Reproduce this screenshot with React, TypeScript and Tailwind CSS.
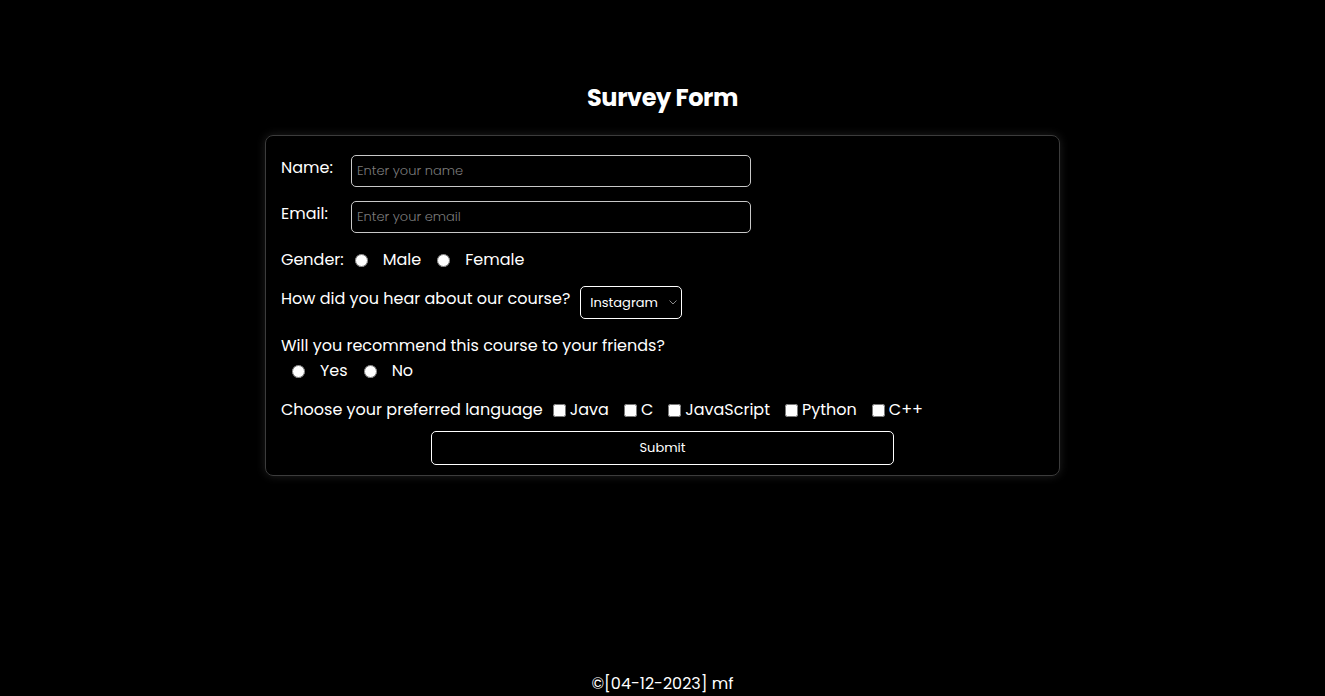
import { ReactElement } from "react"

const FONT = "font-['Poppins','Open_Sans',sans-serif]"
const INPUT_CLASSNAME = 'ml-[70px] w-[400px] h-[32px] bg-black border border-[#c8c8c8] rounded-[5px] px-[5px] text-[13px] text-white font-light placeholder:text-[#7c7c7c] outline-none'
const LABEL_CLASSNAME = 'text-[16px] leading-[24px] pt-[1px] w-0 whitespace-nowrap'

const Radio = ({ name, label, first }: { name: string, label: string, first?: boolean }): ReactElement => (
    <label className='flex items-center'>
        <input type='radio' name={name} className={`w-[13px] h-[13px] m-0 ${first ? 'ml-[11px]' : 'ml-[16px]'} mr-[15px]`} />
        <span>{label}</span>
    </label>
)

const Check = ({ label, first }: { label: string, first?: boolean }): ReactElement => (
    <label className={`flex items-center ${first ? 'ml-[10px]' : 'ml-[15px]'}`}>
        <input type='checkbox' className='w-[13px] h-[13px] m-0 mr-[4px]' />
        <span>{label}</span>
    </label>
)

const App = (): ReactElement => {
    return (
        <div className={`min-h-screen bg-black text-white ${FONT} flex flex-col items-center`}>
            <h1 className='mt-[82px] text-[24px] leading-[32px] font-bold tracking-[-0.4px]'>Survey Form</h1>

            {/* form card */}
            <form className='mt-[21px] w-[795px] border border-[#3c3c3c] rounded-[8px] shadow-[0_0_10px_rgba(255,255,255,0.12)] px-[15px] pt-[19px] pb-[10px] flex flex-col text-[16px] leading-[24px]'>
                <div className='flex items-start'>
                    <label className={LABEL_CLASSNAME}>Name:</label>
                    <input type='text' placeholder='Enter your name' className={INPUT_CLASSNAME} />
                </div>

                <div className='flex items-start mt-[14px]'>
                    <label className={LABEL_CLASSNAME}>Email:</label>
                    <input type='email' placeholder='Enter your email' className={INPUT_CLASSNAME} />
                </div>

                <div className='flex items-center mt-[15px]'>
                    <span>Gender:</span>
                    <Radio name='gender' label='Male' first />
                    <Radio name='gender' label='Female' />
                </div>

                <div className='flex items-start mt-[14px]'>
                    <span className='pt-[1px]'>How did you hear about our course?</span>
                    <div className='relative ml-[10px]'>
                        <select className='appearance-none w-[102px] h-[33px] bg-black border border-white rounded-[5px] pl-[9px] text-[13px] text-white outline-none'>
                            <option>Instagram</option>
                            <option>Facebook</option>
                            <option>YouTube</option>
                        </select>
                        <svg className='absolute right-[5px] top-[14px] pointer-events-none' width='8' height='5' viewBox='0 0 8 5' fill='none'>
                            <path d='M0.5 0.5L4 4L7.5 0.5' stroke='#8a8a8a' strokeWidth='1' />
                        </svg>
                    </div>
                </div>

                <div className='mt-[15px]'>
                    <p>Will you recommend this course to your friends?</p>
                    <div className='flex items-center mt-[1px]'>
                        <Radio name='recommend' label='Yes' first />
                        <Radio name='recommend' label='No' />
                    </div>
                </div>

                <div className='flex items-center mt-[15px]'>
                    <span>Choose your preferred language</span>
                    <Check label='Java' first />
                    <Check label='C' />
                    <Check label='JavaScript' />
                    <Check label='Python' />
                    <Check label='C++' />
                </div>

                <button type='submit' className='self-center mt-[9px] w-[463px] h-[34px] border border-white rounded-[5px] text-[13px] bg-black'>Submit</button>
            </form>

            <footer className='mt-auto text-[16px] leading-[24px]'>©[04-12-2023] mf</footer>
        </div>
    )
}

export default App
